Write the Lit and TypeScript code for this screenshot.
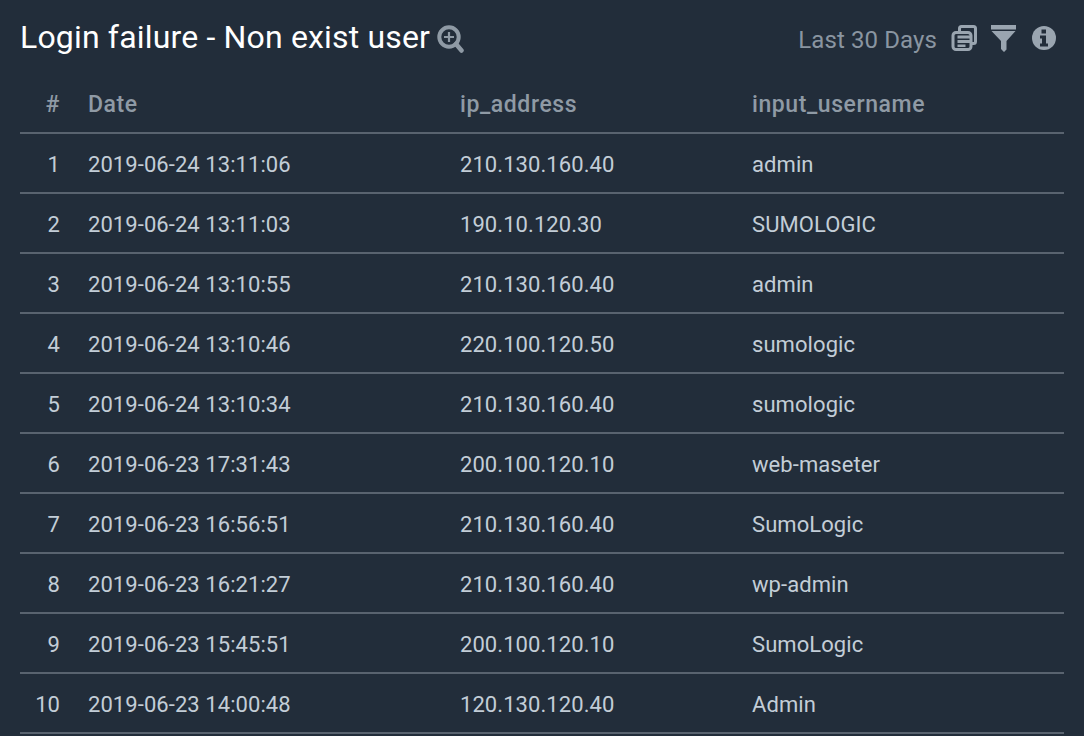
import { LitElement, html, css } from "lit";
import { customElement } from "lit/decorators.js";

const rows: string[][] = [
  ["1", "2019-06-24 13:11:06", "210.130.160.40", "admin"],
  ["2", "2019-06-24 13:11:03", "190.10.120.30", "SUMOLOGIC"],
  ["3", "2019-06-24 13:10:55", "210.130.160.40", "admin"],
  ["4", "2019-06-24 13:10:46", "220.100.120.50", "sumologic"],
  ["5", "2019-06-24 13:10:34", "210.130.160.40", "sumologic"],
  ["6", "2019-06-23 17:31:43", "200.100.120.10", "web-maseter"],
  ["7", "2019-06-23 16:56:51", "210.130.160.40", "SumoLogic"],
  ["8", "2019-06-23 16:21:27", "210.130.160.40", "wp-admin"],
  ["9", "2019-06-23 15:45:51", "200.100.120.10", "SumoLogic"],
  ["10", "2019-06-23 14:00:48", "120.130.120.40", "Admin"],
];

@customElement("app-root")
export class AppRoot extends LitElement {
  static styles = css`
    :host {
      display: block;
      width: 1084px;
      height: 736px;
      overflow: hidden;
      background: #222d3a;
      font-family: Roboto, "Liberation Sans", sans-serif;
      box-sizing: border-box;
      padding: 0 20px;
    }
    .head {
      height: 74px;
      display: flex;
      align-items: center;
      justify-content: space-between;
    }
    .left, .right { display: flex; align-items: center; }
    h1 {
      margin: 0 0 1px 0;
      font-size: 32px;
      font-weight: 400;
      line-height: 40px;
      color: #fff;
      letter-spacing: 0.17px;
    }
    .zoom { margin-left: 7px; margin-top: 3px; display: block; }
    .range {
      font-size: 24px;
      line-height: 32px;
      color: #8a95a1;
      letter-spacing: 0.1px;
      margin-right: 14px;
      margin-top: 6px;
    }
    .right svg { display: block; }
    .i2 { margin-left: 14px; }
    .i3 { margin-left: 16px; margin-right: 8px; }
    .i1, .i2, .i3 { margin-top: 2px; }
    .row {
      display: grid;
      grid-template-columns: 68px 372px 292px 1fr;
      height: 60px;
      align-items: center;
      border-bottom: 2px solid #59636f;
      box-sizing: border-box;
      font-size: 22px;
      letter-spacing: 0.07px;
      color: #c3cdd7;
    }
    .row.th {
      font-size: 23px;
      font-weight: 500;
      color: #8f9aa5;
      letter-spacing: 0.58px;
      padding-top: 3px;
    }
    .n { text-align: right; padding-right: 28px; }
    .row.body { padding-top: 2px; }
  `;

  render() {
    return html`
      <div class="head">
        <div class="left">
          <h1>Login failure - Non exist user</h1>
          <svg class="zoom" width="27" height="28" viewBox="0 0 27 28" fill="none">
            <circle cx="12" cy="12" r="9.7" stroke="#8f9aa5" stroke-width="4"></circle>
            <path d="M19 19 24.500 25.500" stroke="#8f9aa5" stroke-width="4.500" stroke-linecap="round"></path>
            <path d="M12 7v10M7 12h10" stroke="#8f9aa5" stroke-width="2.200"></path>
          </svg>
        </div>
        <div class="right">
          <span class="range">Last 30 Days</span>
          <svg class="i1" width="26" height="26" viewBox="0 0 26 26" fill="none">
            <path stroke="#9aa5b0" stroke-width="3" d="M8.500 6V3.500a2 2 0 0 1 2-2h12a2 2 0 0 1 2 2v13a2 2 0 0 1-2 2H20"></path>
            <rect x="2" y="7.500" width="18" height="17" rx="3" stroke="#9aa5b0" stroke-width="3"></rect>
            <path fill="#9aa5b0" d="M6.500 10.500H21v3H6.500zM6.500 15H21v3H6.500zM6.500 19.500h8V22h-8z"></path>
          </svg>
          <svg class="i2" width="25" height="27" viewBox="0 0 25 27">
            <path fill="#9aa5b0" d="M0 0h25v4.500H0zM0.500 6h24L15.500 16v8.500L13 27l-3-3V16z"></path>
          </svg>
          <svg class="i3" width="24" height="24" viewBox="0 0 24 24">
            <circle cx="12" cy="12" r="12" fill="#9aa5b0"></circle>
            <path fill="#222d3a" d="M9.500 3.500h4.500v4H9.500zM8 9.500h6v8h2v3H8v-3h2v-5H8z"></path>
          </svg>
        </div>
      </div>
      <div class="row th">
        <div class="n">#</div><div>Date</div><div>ip_address</div><div>input_username</div>
      </div>
      ${rows.map(
        (r) => html`<div class="row body">
          <div class="n">${r[0]}</div><div>${r[1]}</div><div>${r[2]}</div><div>${r[3]}</div>
        </div>`
      )}
    `;
  }
}
